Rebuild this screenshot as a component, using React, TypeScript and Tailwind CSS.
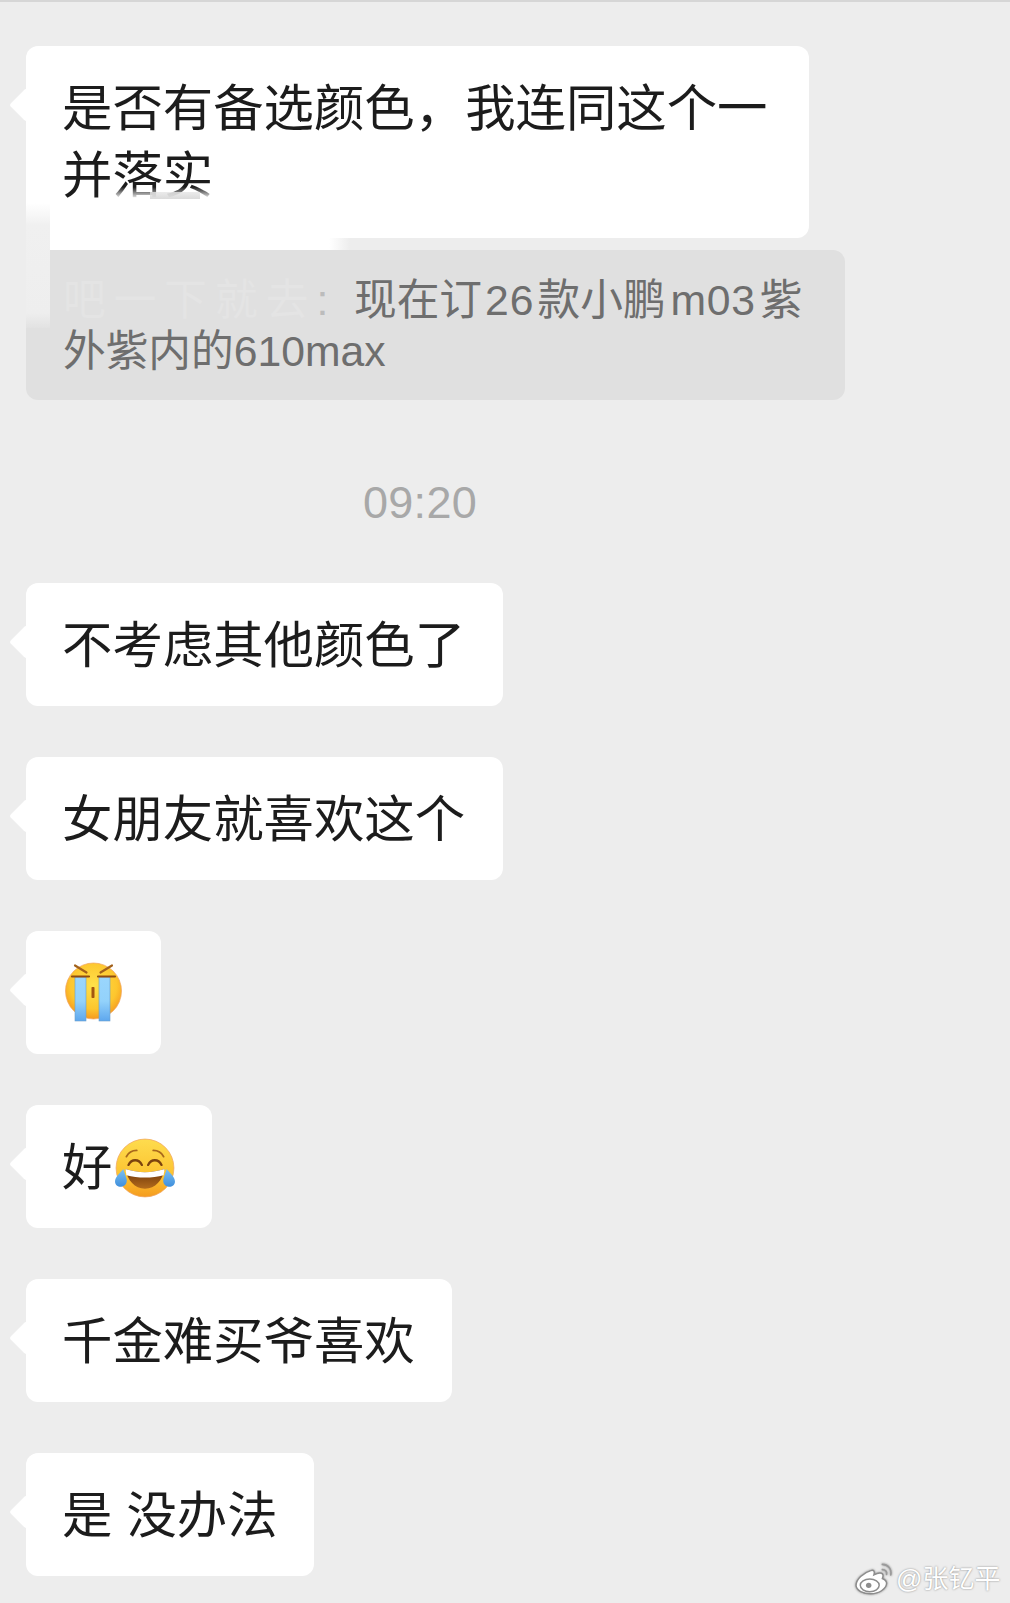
import React from "react";

const font = { fontFamily: '"Liberation Sans","Noto Sans CJK SC",sans-serif' };

function Tail() {
  return <div className="absolute left-[-12px] top-[47px] h-6 w-6 rotate-45 rounded-[3px] bg-white" />;
}

function Bubble({ className, children }: { className: string; children: React.ReactNode }) {
  return (
    <div className={"relative flex h-[123px] items-center rounded-xl bg-white pl-[36px] pt-[2px] text-[50.4px] leading-[67px] text-[#1c1c1c] " + className}>
      <Tail />
      <div className="relative flex items-center whitespace-pre">{children}</div>
    </div>
  );
}

function CryEmoji() {
  return (
    <svg width="60" height="64" viewBox="0 0 60 64" className="ml-[1px] mt-[1px]">
      <defs>
        <radialGradient id="cf" cx="50%" cy="40%" r="60%">
          <stop offset="0%" stopColor="#ffe14a" />
          <stop offset="70%" stopColor="#fdc62e" />
          <stop offset="100%" stopColor="#f59a1f" />
        </radialGradient>
        <linearGradient id="ct" x1="0" y1="0" x2="0" y2="1">
          <stop offset="0%" stopColor="#9ad6fd" />
          <stop offset="55%" stopColor="#93d2fb" />
          <stop offset="100%" stopColor="#5ea7ee" />
        </linearGradient>
      </defs>
      <circle cx="30.5" cy="29" r="28" fill="url(#cf)" stroke="#f0a45e" strokeWidth="0.7" />
      <rect x="12" y="15" width="11" height="44" fill="url(#ct)" stroke="#6b9fc9" strokeWidth="0.6" />
      <rect x="36" y="15" width="11" height="44" fill="url(#ct)" stroke="#6b9fc9" strokeWidth="0.6" />
      <path d="M9 14.5H26M35 14.5H52" stroke="#8f4b10" strokeWidth="2.2" strokeLinecap="round" />
      <path d="M12 3.5L23.5 10.5M49 3.5L37.5 10.5" stroke="#a2611c" strokeWidth="2.2" strokeLinecap="round" />
      <rect x="28.5" y="25" width="3" height="11" rx="0.8" fill="#a4560f" />
    </svg>
  );
}

function LaughEmoji() {
  return (
    <svg width="62" height="62" viewBox="0 0 60 60" className="ml-[2px]">
      <defs>
        <linearGradient id="lf" x1="0" y1="0" x2="0" y2="1">
          <stop offset="0%" stopColor="#fedc4e" />
          <stop offset="65%" stopColor="#fcc22f" />
          <stop offset="100%" stopColor="#f59c20" />
        </linearGradient>
        <linearGradient id="lt" x1="0" y1="0" x2="0" y2="1">
          <stop offset="0%" stopColor="#7cc0f2" />
          <stop offset="100%" stopColor="#3f8fdc" />
        </linearGradient>
        <linearGradient id="lm" x1="0" y1="0" x2="0" y2="1">
          <stop offset="0%" stopColor="#6a3209" />
          <stop offset="100%" stopColor="#b36b1c" />
        </linearGradient>
      </defs>
      <circle cx="30" cy="30" r="28" fill="url(#lf)" stroke="#f0a45e" strokeWidth="0.7" />
      <path d="M11 31C13 42 20 50 30 50S47 42 49 31C37 35 23 35 11 31Z" fill="url(#lm)" />
      <path d="M11 31C23 35 37 35 49 31L48 37C37 40 23 40 12 37Z" fill="#fff" />
      <path d="M14 27C17 21 24 21 27 27M33 27C36 21 43 21 46 27" fill="none" stroke="#7c430f" strokeWidth="2.2" strokeLinecap="round" />
      <path d="M12 19C14 15 18 13 22 13M38 13C42 13 46 15 48 19" fill="none" stroke="#a9691c" strokeWidth="1.8" strokeLinecap="round" />
      <path d="M9 31C5 36 1 39 1 43C1 47 5 49 8 48C12 47 13 43 12 40Z" fill="url(#lt)" />
      <path d="M51 31C55 36 59 39 59 43C59 47 55 49 52 48C48 47 47 43 48 40Z" fill="url(#lt)" />
    </svg>
  );
}

function Weibo() {
  return (
    <svg width="40" height="34" viewBox="0 0 38 32" className="mb-[2px] drop-shadow-[0_0_1px_#8a8a8a]">
      <path d="M15 9C8 11 1 17 1 23C1 28 8 31 15 31C23 31 30 26 30 21C30 18 27 17 26 16.5C27 14 27 12 25 11.5C23 11 20 12 18 13C19 10 18 8 15 9Z" fill="#fff" stroke="#8d8d8d" strokeWidth="1.4" />
      <ellipse cx="14" cy="23" rx="9" ry="6" fill="#fff" stroke="#8d8d8d" strokeWidth="1.4" />
      <circle cx="13" cy="23" r="2.6" fill="#8d8d8d" />
      <path d="M26 3C31 3 35 7 34 13M26 8C29 8 30.5 10 30 12.5" fill="none" stroke="#9a9a9a" strokeWidth="1.6" strokeLinecap="round" />
    </svg>
  );
}

export default function App() {
  return (
    <div className="relative h-[1603px] w-[1010px] overflow-hidden border-t-2 border-[#d6d6d6] bg-[#ededed] pl-[26px] pt-[44px]" style={font}>
      <div className="relative h-[192px] w-[783px] rounded-xl bg-white pl-[36px] pt-[29px] text-[50.4px] leading-[67px] text-[#1c1c1c]">
        <Tail />
        <div className="whitespace-nowrap">是否有备选颜色，我连同这个一</div>
        <div>并落实</div>
      </div>

      <div className="mt-[12px] h-[150px] w-[819px] rounded-xl bg-[#e0e0e0] pl-[37px] pt-[25px] text-[42.7px] leading-[51px] text-[#6e6e6e]">
        <div className="whitespace-nowrap">
          <span className="inline-block w-[291px] whitespace-nowrap align-bottom text-[#e4e4e4]">
            <span className="tracking-[8px]">吧一下就去</span>
            <span className="text-[#bcbcbc]">:</span>
          </span>
          现在订<span className="ml-[3px] mr-[3px] tracking-[1px]">26</span>款小鹏<span className="ml-[5px] mr-[4px] tracking-[0.7px]">m03</span>紫
        </div>
        <div>外紫内的610max</div>
      </div>

      <div className="flex h-[183px] w-[788px] items-center justify-center pt-[22px] text-[45px] tracking-[0.3px] text-[#a8a8a8]">
        09:20
      </div>

      <div className="flex flex-col gap-[51px]">
        <Bubble className="w-[477px]">不考虑其他颜色了</Bubble>
        <Bubble className="w-[477px]">女朋友就喜欢这个</Bubble>
        <Bubble className="w-[135px]"><CryEmoji /></Bubble>
        <Bubble className="w-[186px]">好<LaughEmoji /></Bubble>
        <Bubble className="w-[426px]">千金难买爷喜欢</Bubble>
        <Bubble className="w-[288px]">是 没办法</Bubble>
      </div>

      {/* smudged retouching over the first bubble and the quote */}
      <div className="absolute left-[26px] top-[201px] h-[125px] w-6 bg-[linear-gradient(to_bottom,#ffffff_0%,#f0f0f0_18%,#eeeeee_88%,#e2e2e2_100%)]" />
      <div className="absolute left-[50px] top-[236px] h-3 w-[300px] bg-[linear-gradient(to_right,#ffffff_0%,#ffffff_93%,#ededed_100%)]" />
      <div className="absolute left-[108px] top-[185px] h-[12px] w-[112px] bg-gradient-to-b from-transparent to-white" />
      <div className="absolute left-[150px] top-[190px] h-[7px] w-[50px] bg-gradient-to-b from-[#e6e6e6] to-[#d2d2d2] opacity-80" />

      {/* watermark */}
      <div className="absolute left-[855px] top-[1559px] flex items-center gap-[1px]">
        <Weibo />
        <span className="text-[26px] leading-[32px] text-white [text-shadow:0_0_2px_#7d7d7d]">@张钇平</span>
      </div>
    </div>
  );
}
